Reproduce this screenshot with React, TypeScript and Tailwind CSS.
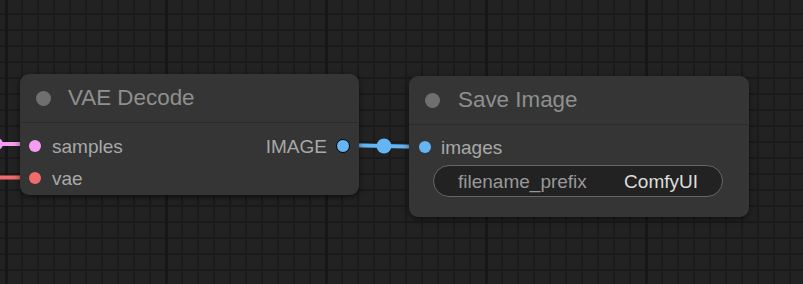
import React from "react";

const font = { fontFamily: '"Liberation Sans", Arial, sans-serif' };

function Slot({ color, label }: { color: string; label: string }) {
  return (
    <div className="flex h-[32px] items-center">
      <span className={`ml-[9px] h-[12px] w-[12px] rounded-full ${color}`} />
      <span className="ml-[11px] text-[19px] leading-none text-[#a8a8a8]">{label}</span>
    </div>
  );
}

export default function App() {
  return (
    <div
      className="relative h-[284px] w-[803px] overflow-hidden bg-[#222222]"
      style={font}
    >
      {/* grid */}
      <div className="absolute inset-0 bg-[linear-gradient(to_right,#1a1a1a_2px,transparent_2px),linear-gradient(to_bottom,#1a1a1a_2px,transparent_2px)] bg-[size:16px_16px] bg-[position:5px_13px]" />
      <div className="absolute inset-0 bg-[linear-gradient(to_right,#171717_3px,transparent_3px)] bg-[size:160px_160px] bg-[position:165px_0px]" />

      {/* links */}
      <svg className="absolute inset-0" width={803} height={284}>
        <line x1={0} y1={144} x2={24} y2={144} stroke="#F59DF2" strokeWidth={4} />
        <circle cx={-3} cy={144} r={6} fill="#F59DF2" />
        <line x1={0} y1={177.5} x2={24} y2={177.5} stroke="#F06C6C" strokeWidth={4} />
        <line x1={343} y1={145} x2={425} y2={147} stroke="#64B5F6" strokeWidth={4} />
        <circle cx={384} cy={146} r={7.5} fill="#64B5F6" />
      </svg>

      {/* VAE Decode node */}
      <div className="absolute left-[20px] top-[74px] h-[121px] w-[339px] rounded-[9px] bg-[#353535] shadow-[0_2px_6px_rgba(0,0,0,0.55)]">
        <div className="flex h-[49px] items-center border-b border-[#2b2b2b]">
          <span className="ml-[16px] h-[15px] w-[15px] rounded-full bg-[#6f6f6f]" />
          <span className="ml-[17px] text-[22.4px] leading-none text-[#8f8f8f]">VAE Decode</span>
        </div>
        <div className="flex pt-[7px]">
          <div className="flex flex-1 flex-col">
            <Slot color="bg-[#F59DF2]" label="samples" />
            <Slot color="bg-[#F06C6C]" label="vae" />
          </div>
          <div className="flex h-[32px] items-center">
            <span className="text-[19px] leading-none text-[#a8a8a8]">IMAGE</span>
            <span className="ml-[9px] mr-[9px] h-[14px] w-[14px] rounded-full border-[1.5px] border-black bg-[#64B5F6]" />
          </div>
        </div>
      </div>

      {/* Save Image node */}
      <div className="absolute left-[409px] top-[76px] h-[141px] w-[340px] rounded-[9px] bg-[#353535] shadow-[0_2px_6px_rgba(0,0,0,0.55)]">
        <div className="flex h-[49px] items-center border-b border-[#2b2b2b]">
          <span className="ml-[16px] h-[15px] w-[15px] rounded-full bg-[#6f6f6f]" />
          <span className="ml-[18px] text-[22.4px] leading-none text-[#8f8f8f]">Save Image</span>
        </div>
        <div className="pt-[6px]">
          <div className="flex h-[32px] items-center">
            <span className="ml-[10px] h-[12px] w-[12px] rounded-full bg-[#64B5F6]" />
            <span className="ml-[10px] text-[19px] leading-none text-[#a8a8a8]">images</span>
          </div>
          <div className="ml-[24px] mr-[26px] mt-[2px] flex h-[32px] items-center justify-between rounded-full border border-[#666666] bg-[#222222] px-[24px]">
            <span className="text-[19px] leading-none text-[#999999]">filename_prefix</span>
            <span className="text-[19px] leading-none text-[#dddddd]">ComfyUI</span>
          </div>
        </div>
      </div>
    </div>
  );
}
